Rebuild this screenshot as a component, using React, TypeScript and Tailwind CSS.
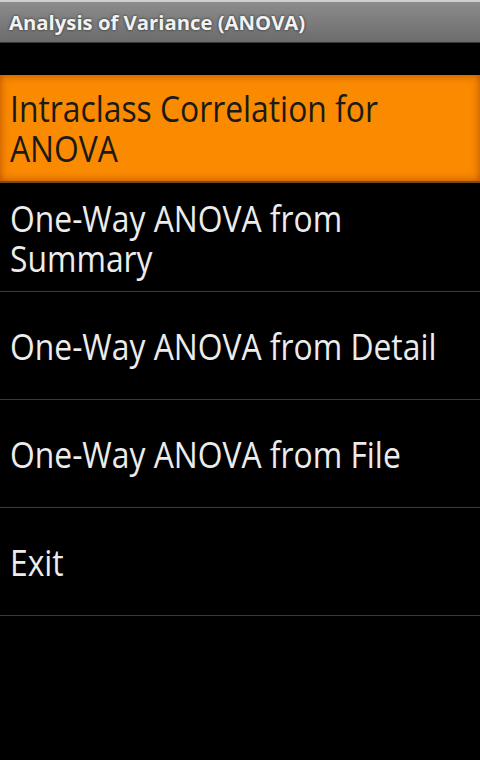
const items = [
  ["Intraclass Correlation for", "ANOVA"],
  ["One-Way ANOVA from", "Summary"],
  ["One-Way ANOVA from Detail"],
  ["One-Way ANOVA from File"],
  ["Exit"],
];

export default function App() {
  return (
    <div
      className="w-[480px] h-[760px] bg-black overflow-hidden"
      style={{ fontFamily: '"Open Sans", "Noto Sans", sans-serif' }}
    >
      {/* title bar */}
      <div className="h-[43px] border-t-2 border-[#cfcfcf] bg-gradient-to-b from-[#8c8c8c] to-[#6c6c6c] border-b border-b-[#3a3a3a] flex items-center px-[9px]">
        <span className="text-[20.3px] font-bold text-[#f2f2f2] [text-shadow:0_0_3px_rgba(0,0,0,0.7)] leading-none">
          Analysis of Variance (ANOVA)
        </span>
      </div>

      <div className="mt-[32px]">
        {items.map((lines, i) => (
          <div key={lines.join(" ")}>
            <div
              className={
                i === 0
                  ? "h-[108px] flex flex-col justify-center px-[10px] bg-[#fa8a00] shadow-[inset_0_0_8px_rgba(170,70,0,0.9)] border-b-2 border-[#7a4a1a]"
                  : "h-[107px] flex flex-col justify-center px-[10px]"
              }
            >
              <p
                className={
                  i === 0
                    ? "whitespace-nowrap text-[37px] leading-[40px] text-[#1a1a1a] scale-x-[0.86] origin-left"
                    : "whitespace-nowrap text-[37px] leading-[40px] text-[#ececec] scale-x-[0.86] origin-left"
                }
              >
                {lines.map((line, j) => (
                  <span key={line}>
                    {j > 0 && <br />}
                    {line}
                  </span>
                ))}
              </p>
            </div>
            <div className={i === 0 ? "h-px bg-black" : "h-px bg-[#3a3a3a]"} />
          </div>
        ))}
      </div>
    </div>
  );
}
